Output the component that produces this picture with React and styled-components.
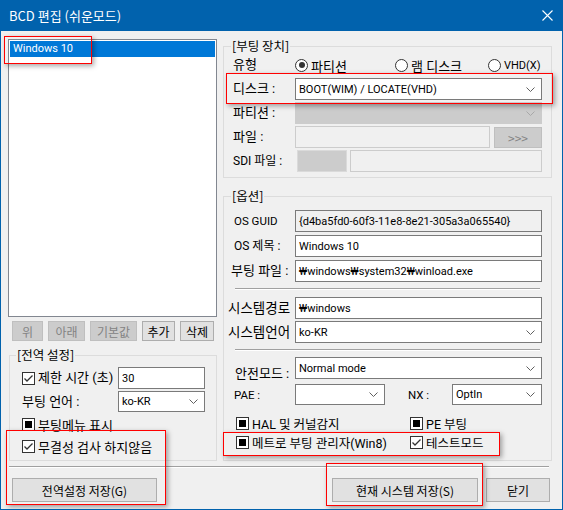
import React from 'react';
import styled, { createGlobalStyle } from 'styled-components';

const GlobalStyle = createGlobalStyle`
  html, body {
    margin: 0;
    padding: 0;
    background: #fff;
  }
  body {
    font-family: Roboto, "Noto Sans CJK KR", sans-serif;
    color: #000;
  }
`;

const Window = styled.div`
  position: relative;
  width: 563px;
  height: 510px;
  box-sizing: border-box;
  border: 1px solid #0162ad;
  border-top: none;
  background: #f0f0f0;
  display: flex;
  flex-direction: column;
  overflow: hidden;
`;

const TitleBar = styled.div`
  height: 31px;
  flex-shrink: 0;
  background: #0162ad;
  color: #fff;
  display: flex;
  align-items: center;
  justify-content: space-between;
  padding: 0 9px 0 8px;
  font-family: "Noto Sans CJK KR", sans-serif;
  font-size: 13px;
`;

const Body = styled.div`
  flex: 1;
  display: flex;
  flex-direction: column;
  padding: 8px 10px 0 7px;
`;

const Main = styled.div`
  display: grid;
  grid-template-columns: 209px 329px;
  column-gap: 6px;
`;

const Column = styled.div`
  display: flex;
  flex-direction: column;
`;

const ListBox = styled.div`
  height: 278px;
  box-sizing: border-box;
  border: 1px solid #828790;
  background: #fff;
  padding: 1px;
`;

const ListItem = styled.div`
  height: 16px;
  line-height: 16px;
  padding-left: 3px;
  background: #0078d7;
  color: #fff;
  font-size: 11px;
`;

const ButtonRow = styled.div`
  display: flex;
  gap: 5px;
  margin-top: 4px;
  padding-left: 4px;
`;

const Button = styled.div`
  width: ${p => p.$w}px;
  height: ${p => p.$h || 20}px;
  box-sizing: border-box;
  border: 1px solid ${p => (p.$disabled ? '#bfbfbf' : '#adadad')};
  background: ${p => (p.$disabled ? '#cccccc' : '#e1e1e1')};
  color: ${p => (p.$disabled ? '#838383' : '#000')};
  font-family: "Noto Sans CJK KR", sans-serif;
  font-size: 12px;
  display: flex;
  align-items: center;
  justify-content: center;
  white-space: nowrap;
`;

const Group = styled.fieldset`
  margin: ${p => p.$margin || '0'};
  height: ${p => p.$h}px;
  box-sizing: border-box;
  min-width: 0;
  border: 1px solid #dcdcdc;
  padding: ${p => p.$pad};
  display: flex;
  flex-direction: column;
`;

const Legend = styled.legend`
  font-family: "Noto Sans CJK KR", sans-serif;
  font-size: 12.5px;
  line-height: 14px;
  padding: 0 1px;
  margin-left: ${p => p.$offset || -2}px;
`;

const Rows = styled.div`
  display: flex;
  flex-direction: column;
  gap: ${p => p.$gap}px;
  margin-top: ${p => p.$mt || 0}px;
`;

const Row = styled.div`
  display: flex;
  align-items: ${p => p.$align || 'center'};
  height: ${p => p.$h}px;
`;

const Label = styled.span`
  width: ${p => p.$w}px;
  flex-shrink: 0;
  margin-left: ${p => p.$ml || 0}px;
  margin-bottom: ${p => p.$mb || 0}px;
  font-size: ${p => p.$size || 13}px;
  white-space: nowrap;
  line-height: 16px;
`;

const Field = styled.div`
  ${p => (p.$w ? `width: ${p.$w}px; flex-shrink: 0;` : 'flex: 1;')}
  height: 100%;
  box-sizing: border-box;
  border: 1px solid ${p => (p.$disabled ? '#cccccc' : '#7a7a7a')};
  background: ${p => (p.$disabled || p.$readonly ? '#f0f0f0' : '#fff')};
  margin-left: ${p => p.$ml || 0}px;
  padding: 0 3px;
  display: flex;
  align-items: center;
  font-size: 11px;
  white-space: nowrap;
  overflow: hidden;
`;

const Combo = styled(Field)`
  justify-content: space-between;
  padding-right: 6px;
  background: ${p => (p.$disabled ? '#cccccc' : '#fff')};
`;

const GreyBox = styled.div`
  width: 50px;
  height: 100%;
  box-sizing: border-box;
  border: 1px solid #dadada;
  background: #cccccc;
  margin: 0 3px 0 2px;
`;

const Separator = styled.div`
  height: 0;
  border-top: 1px solid #a0a0a0;
  border-bottom: 1px solid #fff;
  margin: ${p => p.$margin};
`;

const Option = styled.div`
  width: ${p => p.$w || 'auto'};
  display: flex;
  align-items: center;
  gap: 3px;
  font-size: ${p => p.$size || 12.5}px;
  white-space: nowrap;
  flex-shrink: 0;
`;

const RadioDot = styled.span`
  width: 13px;
  height: 13px;
  box-sizing: border-box;
  border: 1px solid #333;
  border-radius: 50%;
  background: #fff;
  display: flex;
  align-items: center;
  justify-content: center;
  &::after {
    content: '';
    width: 6px;
    height: 6px;
    border-radius: 50%;
    background: ${p => (p.$on ? '#333' : 'transparent')};
  }
`;

const Box = styled.span`
  width: 13px;
  height: 13px;
  box-sizing: border-box;
  border: 1px solid #333;
  background: #fff;
  display: flex;
  align-items: center;
  justify-content: center;
  flex-shrink: 0;
`;

const Fill = styled.span`
  width: 7px;
  height: 7px;
  background: #000;
`;

const CheckRow = styled.div`
  display: flex;
  align-items: center;
  height: 13px;
  padding-left: ${p => p.$pl || 0}px;
`;

const Footer = styled.div`
  display: flex;
  justify-content: space-between;
  margin-top: 10px;
  padding: 0 2px 0 4px;
`;

const FooterRight = styled.div`
  display: flex;
  gap: 8px;
`;

const Mark = styled.div`
  position: absolute;
  left: ${p => p.$x - 1}px;
  top: ${p => p.$y}px;
  width: ${p => p.$w}px;
  height: ${p => p.$h}px;
  box-sizing: border-box;
  border: 1px solid #f00;
  box-shadow: 2px 2px 5px rgba(0, 0, 0, 0.35);
  pointer-events: none;
`;

const Chevron = ({ disabled }) => (
  <svg width="9" height="5" viewBox="0 0 9 5">
    <polyline points="0.5,0.5 4.5,4.5 8.5,0.5" fill="none" stroke={disabled ? '#a8a8a8' : '#606060'} strokeWidth="1" />
  </svg>
);

const Check = ({ state, children, w, size }) => (
  <Option $w={w} $size={size}>
    <Box>
      {state === 'checked' && (
        <svg width="11" height="11" viewBox="0 0 11 11">
          <polyline points="1.5,5.5 4,8 9.5,2.5" fill="none" stroke="#333" strokeWidth="1.3" />
        </svg>
      )}
      {state === 'filled' && <Fill />}
    </Box>
    {children}
  </Option>
);

const Radio = ({ on, children, w, size }) => (
  <Option $w={w} $size={size}>
    <RadioDot $on={on} />
    {children}
  </Option>
);

const Select = ({ value, w, disabled }) => (
  <Combo $w={w} $disabled={disabled}>
    <span>{value}</span>
    <Chevron disabled={disabled} />
  </Combo>
);

export default function App() {
  return (
    <>
      <GlobalStyle />
      <Window>
        <TitleBar>
          <span>BCD 편집 (쉬운모드)</span>
          <svg width="11" height="11" viewBox="0 0 11 11">
            <path d="M0.5 0.5 L10.5 10.5 M10.5 0.5 L0.5 10.5" stroke="#fff" strokeWidth="1.1" />
          </svg>
        </TitleBar>
        <Body>
          <Main>
            <Column>
              <ListBox>
                <ListItem>Windows 10</ListItem>
              </ListBox>
              <ButtonRow>
                <Button $w={31} $disabled>위</Button>
                <Button $w={37} $disabled>아래</Button>
                <Button $w={47} $disabled>기본값</Button>
                <Button $w={33}>추가</Button>
                <Button $w={34}>삭제</Button>
              </ButtonRow>
              <Group $h={113} $margin="7px 0 0 1px" $pad="5px 11px 0 12px">
                <Legend $offset={-6}>[전역 설정]</Legend>
                <Rows $gap={2}>
                  <Row $h={22}>
                    <Label $w={96}>
                      <Check state="checked" size={13}>제한 시간 (초)</Check>
                    </Label>
                    <Field>30</Field>
                  </Row>
                  <Row $h={21}>
                    <Label $w={96}>부팅 언어 :</Label>
                    <Select value="ko-KR" />
                  </Row>
                </Rows>
                <Rows $gap={9} $mt={6}>
                  <CheckRow>
                    <Check state="filled" size={13}>부팅메뉴 표시</Check>
                  </CheckRow>
                  <CheckRow>
                    <Check state="checked" size={13}>무결성 검사 하지않음</Check>
                  </CheckRow>
                </Rows>
              </Group>
            </Column>

            <Column>
              <Group $h={139} $pad="1px 9px 5px 9px">
                <Legend>[부팅 장치]</Legend>
                <Rows $gap={2}>
                  <Row $h={22}>
                    <Label $w={62}>유형</Label>
                    <Radio on w="100px" size={13}>파티션</Radio>
                    <Radio w="93px" size={13}>램 디스크</Radio>
                    <Radio size={11}>VHD(X)</Radio>
                  </Row>
                  <Row $h={22}>
                    <Label $w={62}>디스크 :</Label>
                    <Select value="BOOT(WIM) / LOCATE(VHD)" />
                  </Row>
                  <Row $h={22}>
                    <Label $w={62}>파티션 :</Label>
                    <Select value="" disabled />
                  </Row>
                  <Row $h={22}>
                    <Label $w={62}>파일 :</Label>
                    <Field $w={195} $disabled />
                    <Button $w={48} $h={21} $disabled style={{ marginLeft: 4 }}>&gt;&gt;&gt;</Button>
                  </Row>
                  <Row $h={22}>
                    <Label $w={62} $size={12}>SDI 파일 :</Label>
                    <GreyBox />
                    <Field $disabled />
                  </Row>
                </Rows>
              </Group>

              <Group $h={272} $margin="11px 0 0 0" $pad="7px 9px 0 9px">
                <Legend>[옵션]</Legend>
                <Rows $gap={3}>
                  <Row $h={22}>
                    <Label $w={61} $size={11.5} $ml={1}>OS GUID</Label>
                    <Field $readonly>{'{d4ba5fd0-60f3-11e8-8e21-305a3a065540}'}</Field>
                  </Row>
                  <Row $h={22}>
                    <Label $w={61} $size={12} $ml={1}>OS 제목 :</Label>
                    <Field>Windows 10</Field>
                  </Row>
                  <Row $h={22}>
                    <Label $w={64} $ml={-2}>부팅 파일 :</Label>
                    <Field>₩windows₩system32₩winload.exe</Field>
                  </Row>
                </Rows>
                <Separator $margin="6px 2px 7px 2px" />
                <Rows $gap={2}>
                  <Row $h={22}>
                    <Label $w={67} $ml={-5} $size={13.5}>시스템경로</Label>
                    <Field>₩windows</Field>
                  </Row>
                  <Row $h={22}>
                    <Label $w={67} $ml={-5} $size={13.5}>시스템언어</Label>
                    <Select value="ko-KR" />
                  </Row>
                </Rows>
                <Separator $margin="6px 2px 6px 2px" />
                <Rows $gap={5}>
                  <Row $h={22} $align="flex-end">
                    <Label $w={60} $ml={2} $mb={-3}>안전모드 :</Label>
                    <Select value="Normal mode" />
                  </Row>
                  <Row $h={21}>
                    <Label $w={61} $ml={1} $size={11.5}>PAE :</Label>
                    <Select value="" w={90} />
                    <Label $w={44} $ml={23} $size={11.5}>NX :</Label>
                    <Select value="OptIn" />
                  </Row>
                </Rows>
                <Rows $gap={6} $mt={12}>
                  <CheckRow $pl={3}>
                    <Check state="filled" w="174px" size={12.5}>HAL 및 커널감지</Check>
                    <Check state="filled" size={12.5}>PE 부팅</Check>
                  </CheckRow>
                  <CheckRow $pl={3}>
                    <Check state="filled" w="174px" size={12.5}>메트로 부팅 관리자(Win8)</Check>
                    <Check state="checked" size={12.5}>테스트모드</Check>
                  </CheckRow>
                </Rows>
              </Group>
            </Column>
          </Main>

          <Separator $margin="5px 3px 0 1px" />
          <Footer>
            <Button $w={145} $h={24}>전역설정 저장(G)</Button>
            <FooterRight>
              <Button $w={146} $h={24}>현재 시스템 저장(S)</Button>
              <Button $w={64} $h={24}>닫기</Button>
            </FooterRight>
          </Footer>
        </Body>

        <Mark $x={4} $y={36} $w={88} $h={28} />
        <Mark $x={226} $y={73} $w={327} $h={31} />
        <Mark $x={6} $y={430} $w={160} $h={75} />
        <Mark $x={223} $y={432} $w={277} $h={24} />
        <Mark $x={326} $y={463} $w={157} $h={43} />
      </Window>
    </>
  );
}
